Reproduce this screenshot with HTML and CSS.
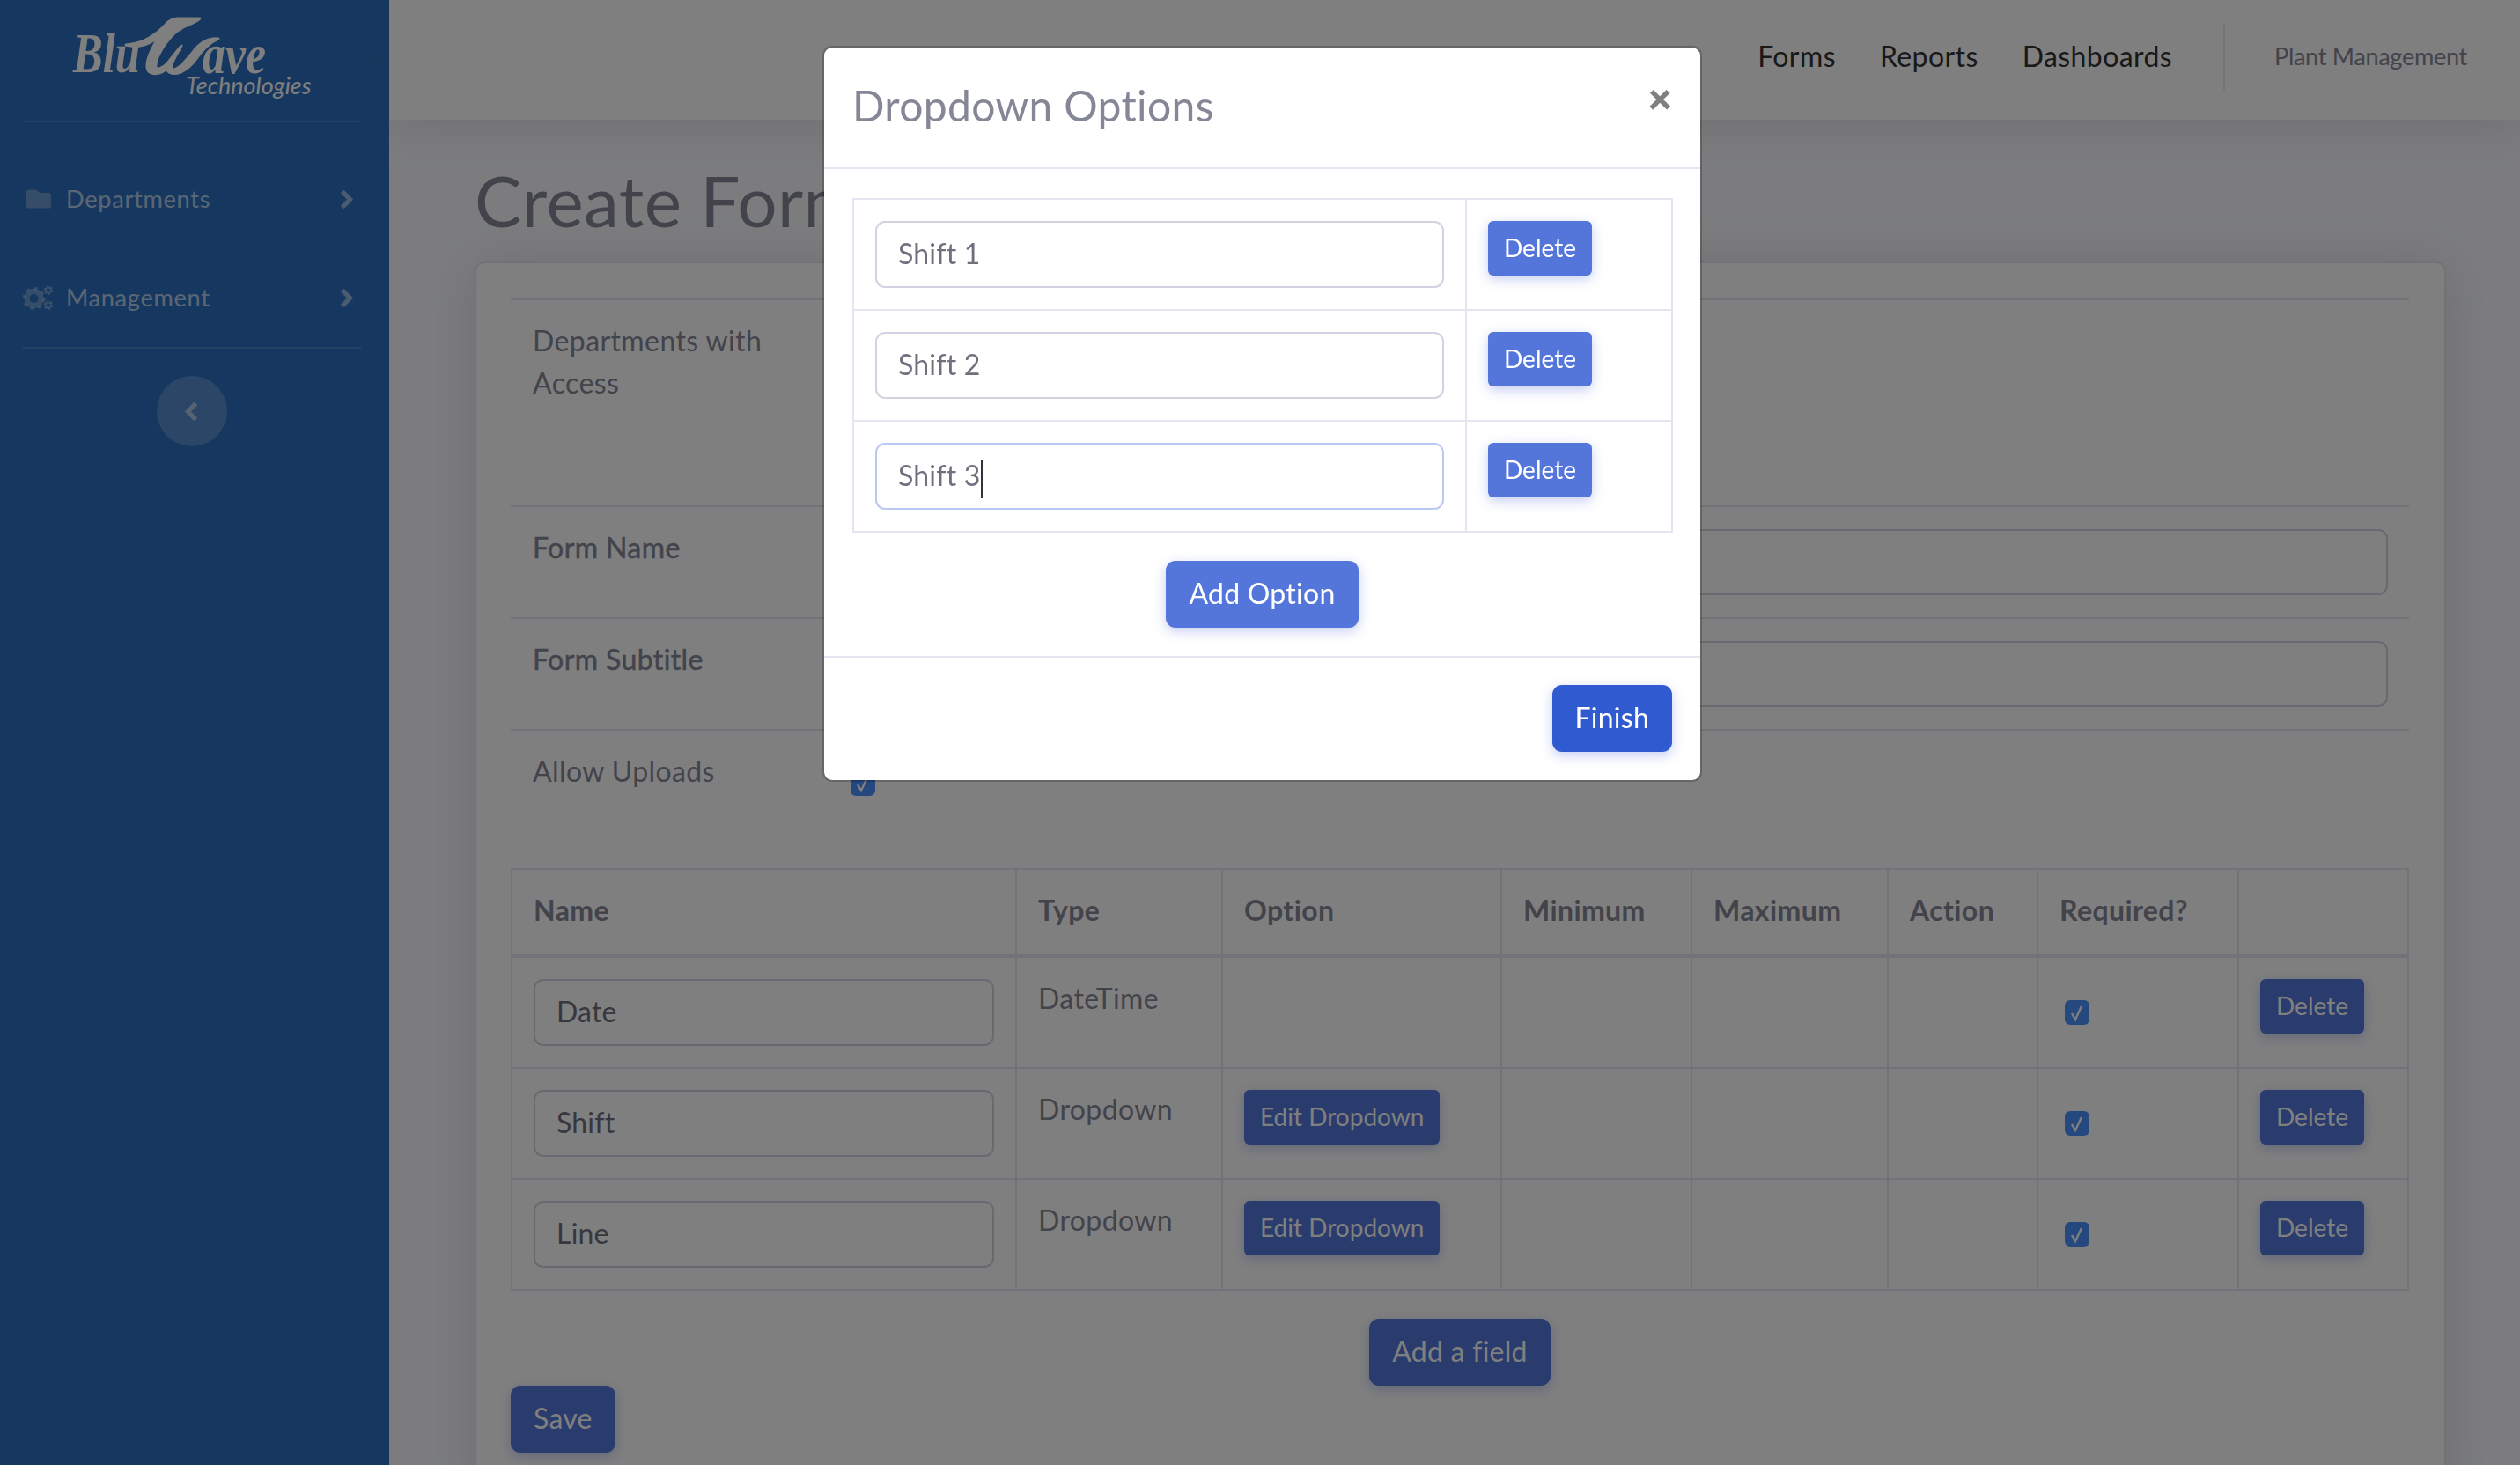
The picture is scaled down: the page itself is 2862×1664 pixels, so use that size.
FILE: index.html
```html
<!DOCTYPE html>
<html lang="en">
<head>
<meta charset="utf-8">
<title>Create Form</title>
<link rel="stylesheet" href="styles.css">
</head>
<body>
<div class="page">
  <aside class="sidebar">
    <a class="brand" href="#">
      <svg class="logo" viewBox="0 0 300 110" width="300" height="110">
        <text class="logo-script" x="3" y="72" textLength="76" lengthAdjust="spacingAndGlyphs">Blu</text>
        <text class="logo-script" x="150" y="73" textLength="72" lengthAdjust="spacingAndGlyphs">ave</text>
        <path class="logo-w" d="M63 41 C80 40 95 32 108 18 C114 11 120 11 122 11 L147 11 C140 18 128 18 118 28 C104 42 96 58 97 66 C98 70 104 68 110 62 L126 42 C118 56 112 66 116 69 C122 70 130 60 140 48 C148 38 158 33 168 34 C158 38 150 46 142 58 C132 72 118 76 112 72 C110 70 109 68 109 68 C104 74 92 76 88 70 C84 62 92 44 102 30 C92 40 78 45 63 41 Z"/>
        <text class="logo-tech" x="131" y="97">Technologies</text>
      </svg>
    </a>
    <hr class="side-rule">
    <ul class="side-nav">
      <li class="side-item">
        <span class="side-icon">
          <svg viewBox="0 0 512 512" width="28" height="28"><path d="M464 128H272l-64-64H48C21.49 64 0 85.49 0 112v288c0 26.51 21.49 48 48 48h416c26.51 0 48-21.49 48-48V176c0-26.51-21.49-48-48-48z"/></svg>
        </span>
        <span class="side-label">Departments</span>
        <svg class="chev" viewBox="24 96 208 320" width="14" height="21"><path d="M224.3 273l-136 136c-9.4 9.4-24.6 9.4-33.9 0l-22.6-22.6c-9.4-9.4-9.4-24.6 0-33.9l96.4-96.4-96.4-96.4c-9.4-9.4-9.4-24.6 0-33.9L54.3 103c9.4-9.4 24.6-9.4 33.9 0l136 136c9.5 9.4 9.5 24.6.1 34z"/></svg>
      </li>
      <li class="side-item">
        <span class="side-icon">
          <svg class="cogs" viewBox="0 0 35 28" width="35" height="28">
            <circle cx="12.5" cy="15" r="8" stroke-width="6"/>
            <circle cx="12.5" cy="15" r="11.5" stroke-width="3" stroke-dasharray="4 5"/>
            <circle cx="29" cy="5.5" r="3" stroke-width="2.2"/>
            <circle cx="29" cy="5.5" r="4.6" stroke-width="1.8" stroke-dasharray="2.2 2.6"/>
            <circle cx="29" cy="22.5" r="3" stroke-width="2.2"/>
            <circle cx="29" cy="22.5" r="4.6" stroke-width="1.8" stroke-dasharray="2.2 2.6"/>
          </svg>
        </span>
        <span class="side-label">Management</span>
        <svg class="chev" viewBox="24 96 208 320" width="14" height="21"><path d="M224.3 273l-136 136c-9.4 9.4-24.6 9.4-33.9 0l-22.6-22.6c-9.4-9.4-9.4-24.6 0-33.9l96.4-96.4-96.4-96.4c-9.4-9.4-9.4-24.6 0-33.9L54.3 103c9.4-9.4 24.6-9.4 33.9 0l136 136c9.5 9.4 9.5 24.6.1 34z"/></svg>
      </li>
    </ul>
    <hr class="side-rule">
    <button class="side-toggle" type="button" aria-label="Collapse">
      <svg viewBox="24 96 208 320" width="14" height="21"><path d="M31.7 239l136-136c9.4-9.4 24.6-9.4 33.9 0l22.6 22.6c9.4 9.4 9.4 24.6 0 33.9L127.9 256l96.4 96.4c9.4 9.4 9.4 24.6 0 33.9L201.7 409c-9.4 9.4-24.6 9.4-33.9 0l-136-136c-9.5-9.4-9.5-24.6-.1-34z"/></svg>
    </button>
  </aside>

  <div class="main">
    <header class="topbar">
      <nav class="top-nav">
        <a href="#">Forms</a>
        <a href="#">Reports</a>
        <a href="#">Dashboards</a>
      </nav>
      <span class="top-divider"></span>
      <span class="top-user">Plant Management</span>
    </header>

    <section class="content">
      <h1 class="page-title">Create Form</h1>
      <div class="card">
        <div class="form-row form-row-tall">
          <label class="form-label">Departments with Access</label>
        </div>
        <div class="form-row">
          <label class="form-label form-label-strong">Form Name</label>
          <input class="control control-grow" type="text">
        </div>
        <div class="form-row">
          <label class="form-label form-label-strong">Form Subtitle</label>
          <input class="control control-grow" type="text">
        </div>
        <div class="form-row form-row-last">
          <label class="form-label">Allow Uploads</label>
          <span class="check check-form"><svg viewBox="0 0 28 28" width="28" height="28"><path d="M8 15l4 7 7-15"/></svg></span>
        </div>

        <table class="fields">
          <colgroup>
            <col class="c-name"><col class="c-type"><col class="c-option"><col class="c-min"><col class="c-max"><col class="c-action"><col class="c-req"><col class="c-del">
          </colgroup>
          <thead>
            <tr><th>Name</th><th>Type</th><th>Option</th><th>Minimum</th><th>Maximum</th><th>Action</th><th>Required?</th><th></th></tr>
          </thead>
          <tbody>
            <tr>
              <td><input class="control" type="text" value="Date"></td>
              <td class="cell-text">DateTime</td>
              <td></td><td></td><td></td><td></td>
              <td><span class="check check-cell"><svg viewBox="0 0 28 28" width="28" height="28"><path d="M8 15l4 7 7-15"/></svg></span></td>
              <td><button class="btn btn-sm" type="button">Delete</button></td>
            </tr>
            <tr>
              <td><input class="control" type="text" value="Shift"></td>
              <td class="cell-text">Dropdown</td>
              <td><button class="btn btn-sm" type="button">Edit Dropdown</button></td>
              <td></td><td></td><td></td>
              <td><span class="check check-cell"><svg viewBox="0 0 28 28" width="28" height="28"><path d="M8 15l4 7 7-15"/></svg></span></td>
              <td><button class="btn btn-sm" type="button">Delete</button></td>
            </tr>
            <tr>
              <td><input class="control" type="text" value="Line"></td>
              <td class="cell-text">Dropdown</td>
              <td><button class="btn btn-sm" type="button">Edit Dropdown</button></td>
              <td></td><td></td><td></td>
              <td><span class="check check-cell"><svg viewBox="0 0 28 28" width="28" height="28"><path d="M8 15l4 7 7-15"/></svg></span></td>
              <td><button class="btn btn-sm" type="button">Delete</button></td>
            </tr>
          </tbody>
        </table>

        <div class="add-field"><button class="btn" type="button">Add a field</button></div>
        <button class="btn" type="button">Save</button>
      </div>
    </section>
  </div>
</div>

<div class="backdrop"></div>

<div class="modal" role="dialog">
  <div class="modal-header">
    <h5 class="modal-title">Dropdown Options</h5>
    <button class="close" type="button" aria-label="Close">×</button>
  </div>
  <div class="modal-body">
    <table class="options">
      <colgroup><col class="o-value"><col class="o-del"></colgroup>
      <tbody>
        <tr>
          <td><input class="control" type="text" value="Shift 1"></td>
          <td><button class="btn btn-sm" type="button">Delete</button></td>
        </tr>
        <tr>
          <td><input class="control" type="text" value="Shift 2"></td>
          <td><button class="btn btn-sm" type="button">Delete</button></td>
        </tr>
        <tr>
          <td><div class="control control-focus">Shift 3<span class="caret"></span></div></td>
          <td><button class="btn btn-sm" type="button">Delete</button></td>
        </tr>
      </tbody>
    </table>
    <div class="add-option"><button class="btn" type="button">Add Option</button></div>
  </div>
  <div class="modal-footer">
    <button class="btn btn-strong" type="button">Finish</button>
  </div>
</div>
</body>
</html>
```

FILE: styles.css
```css
* { box-sizing: border-box; }

html, body {
  margin: 0;
  height: 100%;
  overflow: hidden;
}

body {
  font-family: Lato, "Noto Sans", sans-serif;
  font-size: 32px;
  line-height: 48px;
  letter-spacing: .4px;
  color: #858796;
  background: #f8f9fc;
}

.page {
  display: flex;
  height: 1664px;
}

/* sidebar */
.sidebar {
  flex: 0 0 442px;
  padding-right: 6px;
  background: #2c70c0;
  display: flex;
  flex-direction: column;
  align-items: center;
}

.brand {
  display: block;
  height: 137px;
  width: 100%;
  padding: 10px 0 0 80px;
}

.logo { display: block; }

.logo-script {
  font-family: "Liberation Serif", serif;
  font-style: italic;
  font-weight: 700;
  font-size: 64px;
  letter-spacing: 0;
  fill: #fff;
}

.logo-w {
  fill: #fff;
  stroke: #fff;
  stroke-width: 3;
  stroke-linejoin: round;
}

.logo-tech {
  font-family: Lato, sans-serif;
  font-style: italic;
  font-size: 27px;
  letter-spacing: 0;
  fill: #fff;
}

.side-rule {
  width: 384px;
  height: 2px;
  margin: 0;
  border: 0;
  background: rgba(255, 255, 255, .15);
}

.side-nav {
  list-style: none;
  width: 100%;
  margin: 31px 0 0;
  padding: 0;
}

.side-item {
  display: flex;
  align-items: center;
  height: 112px;
  padding: 0 35px 0 26px;
  font-size: 27.2px;
  letter-spacing: .7px;
  color: rgba(255, 255, 255, .68);
}

.side-icon {
  display: flex;
  justify-content: center;
  width: 35px;
  margin-right: 14px;
}

.side-icon svg { fill: rgba(255, 255, 255, .3); }

.side-icon .cogs { fill: none; stroke: rgba(255, 255, 255, .3); }
.cogs circle { fill: none; }

.side-label { flex: 1; }

.chev { fill: rgba(255, 255, 255, .5); }

.side-toggle {
  display: flex;
  align-items: center;
  justify-content: center;
  width: 80px;
  height: 80px;
  margin-top: 31px;
  padding: 0;
  border: 0;
  border-radius: 50%;
  background: rgba(255, 255, 255, .2);
}

.side-toggle svg { fill: rgba(255, 255, 255, .5); margin-right: 2px; }

/* main column */
.main {
  flex: 1;
  min-width: 0;
  display: flex;
  flex-direction: column;
}

.topbar {
  flex: 0 0 136px;
  display: flex;
  align-items: center;
  justify-content: flex-end;
  padding: 0 60px 8px 0;
  background: #fff;
  box-shadow: 0 4px 56px rgba(58, 59, 69, .15);
  position: relative;
}

.top-nav { display: flex; gap: 50px; }

.top-nav a {
  color: #333;
  text-decoration: none;
}

.top-divider {
  width: 2px;
  height: 76px;
  margin: 0 56px 0 58px;
  background: #e3e6f0;
}

.top-user {
  font-size: 27.2px;
  letter-spacing: -.35px;
}

.content { padding: 43px 84px 0 97px; }

.page-title {
  margin: 0 0 22px;
  font-size: 80px;
  font-weight: 400;
  line-height: 96px;
  letter-spacing: .4px;
  color: #858796;
}

.card {
  background: #fff;
  border: 2px solid #e3e6f0;
  border-radius: 11px;
  padding: 40px 40px 0 39px;
  height: 1400px;
  box-shadow: 0 4px 56px rgba(58, 59, 69, .15);
}

/* form rows */
.form-row {
  display: flex;
  align-items: flex-start;
  padding: 22px 24px 25px 25px;
  border-top: 2px solid #e3e6f0;
}

.form-row-tall { min-height: 235px; }
.form-row-last { min-height: 158px; }

.form-label {
  flex: 0 0 361px;
  padding-right: 90px;
}

.form-label-strong { -webkit-text-stroke: .5px #858796; }

.control {
  display: block;
  width: 100%;
  height: 76px;
  padding: 0 24px 3px;
  border: 2px solid #d1d3e2;
  border-radius: 11px;
  background: #fff;
  font: inherit;
  letter-spacing: .2px;
  line-height: 69px;
  color: #6e707e;
}

.control-grow {
  flex: 1;
  height: 75px;
  margin-top: 3px;
}

.control-focus { border-color: #bac8f3; }

.caret {
  display: inline-block;
  width: 2px;
  height: 44px;
  margin-left: 1px;
  vertical-align: middle;
  background: #333;
}

.check {
  display: block;
  width: 28px;
  height: 28px;
  border-radius: 6px;
  background: #4a93ff;
}

.check svg {
  display: block;
  fill: none;
  stroke: #fff;
  stroke-width: 2.4;
}

.check-form { margin-top: 24px; }
.check-cell { margin: 24px 0 0 6px; }

/* tables */
table {
  border-collapse: collapse;
  table-layout: fixed;
}

.fields { width: 2154px; }

.c-name { width: 573px; }
.c-type { width: 234px; }
.c-option { width: 317px; }
.c-min { width: 216px; }
.c-max { width: 223px; }
.c-action { width: 170px; }
.c-req { width: 228px; }
.c-del { width: 193px; }

.fields th,
.fields td,
.options td {
  padding: 24px;
  border: 2px solid #e3e6f0;
  text-align: left;
  vertical-align: top;
}

.fields th {
  padding-top: 22px;
  padding-bottom: 26px;
  border-bottom-width: 4px;
  font-weight: 700;
}

.fields td.cell-text {
  padding-top: 22px;
  padding-bottom: 26px;
}

.options { width: 930px; }
.o-value { width: 696px; }
.o-del { width: 234px; }

/* buttons */
.btn {
  display: inline-block;
  padding: 11px 24px 13px;
  border: 2px solid transparent;
  border-radius: 11px;
  background: #5476da;
  color: #fff;
  font: inherit;
  letter-spacing: .25px;
  box-shadow: 0 4px 14px rgba(58, 90, 220, .3);
}

.btn-sm {
  padding: 7px 16px 9px;
  border-radius: 6px;
  font-size: 28px;
  letter-spacing: 0;
  line-height: 42px;
}

.btn-strong { background: #2f5ad0; }

.add-field {
  margin-top: 32px;
  text-align: center;
}

/* modal */
.backdrop {
  position: fixed;
  inset: 0;
  background: rgba(0, 0, 0, .5);
}

.modal {
  position: fixed;
  top: 52px;
  left: 934px;
  width: 999px;
  background: #fff;
  border: 2px solid rgba(0, 0, 0, .2);
  border-radius: 11px;
  background-clip: padding-box;
}

.modal-header {
  display: flex;
  justify-content: space-between;
  padding: 30px 32px 34px;
  border-bottom: 2px solid #e3e6f0;
}

.modal-title {
  margin: 0;
  font-size: 48px;
  font-weight: 400;
  line-height: 72px;
  letter-spacing: .35px;
}

.close {
  margin: -18px 0 0;
  padding: 0;
  border: 0;
  background: none;
  font: 800 48px/72px Lato, sans-serif;
  color: #808080;
}

.modal-body { padding: 33px 32px 32px; }

.add-option {
  margin-top: 32px;
  text-align: center;
}

.modal-footer {
  display: flex;
  justify-content: flex-end;
  padding: 31px 32px 32px;
  border-top: 2px solid #e3e6f0;
}
```
